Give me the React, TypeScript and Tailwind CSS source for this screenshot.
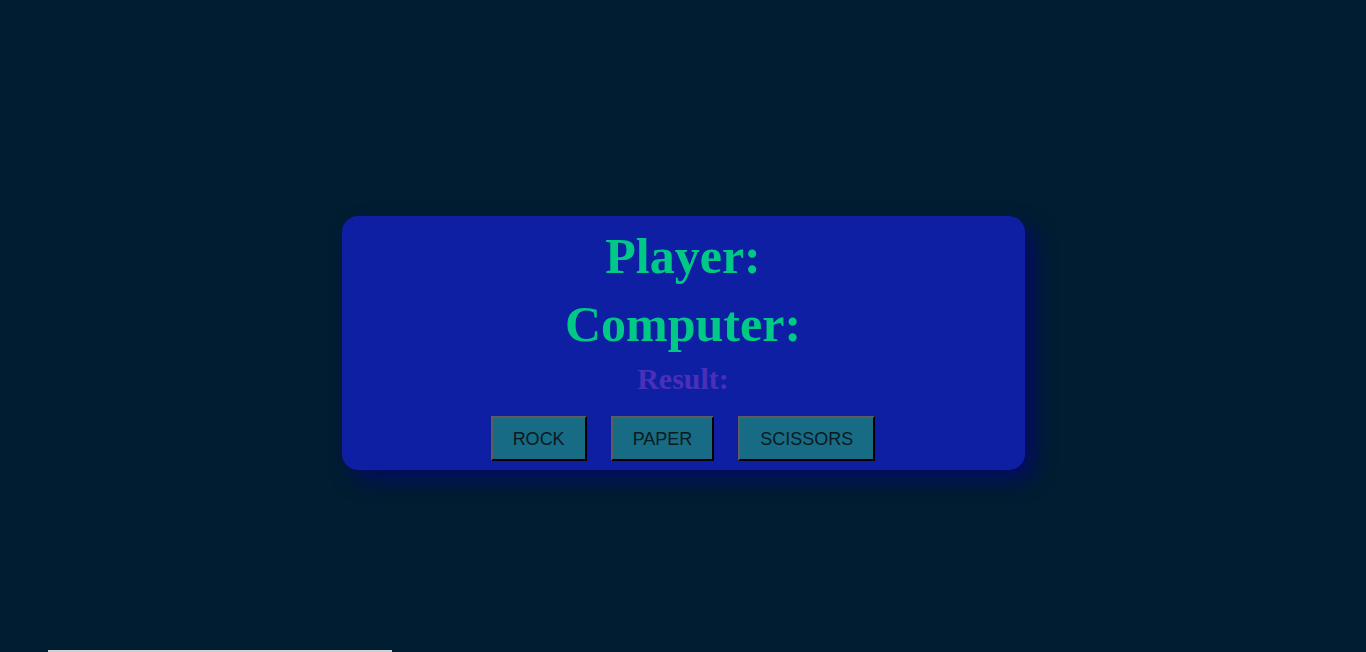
const choices = ["ROCK", "PAPER", "SCISSORS"];

function ChoiceButton({ label }: { label: string }) {
  return (
    <button className="h-[45px] border-2 border-t-[#5c5c5c] border-l-[#5c5c5c] border-r-black border-b-black bg-[#176b85] px-[20px] font-['Liberation_Sans',Arial,sans-serif] text-[18px] leading-[20px] text-[#0a1a20]">
      {label}
    </button>
  );
}

export default function App() {
  return (
    <div className="h-[652px] overflow-hidden bg-[#001d31] font-['Liberation_Serif','Times_New_Roman',serif]">
      <div className="flex h-[650px] justify-center pt-[216px]">
        <div className="flex h-[254px] w-[683px] flex-col items-center rounded-[16px] bg-[#0e1fa4] pt-[11px] shadow-[10px_10px_20px_rgba(2,12,100,0.95)]">
          <h1 className="text-[50px] font-bold leading-[58px] text-[#00c886]">Player:</h1>
          <h1 className="mt-[10px] text-[50px] font-bold leading-[58px] text-[#00c886]">Computer:</h1>
          <h2 className="mt-[9px] text-[30px] font-bold leading-[34px] text-[#4a30b9]">Result:</h2>
          <div className="mt-[20px] flex gap-[24px]">
            {choices.map((c) => (
              <ChoiceButton key={c} label={c} />
            ))}
          </div>
        </div>
      </div>
      <div className="ml-[48px] h-[20px] w-[344px] border-t-2 border-[#d0d0d0] bg-white" />
    </div>
  );
}
